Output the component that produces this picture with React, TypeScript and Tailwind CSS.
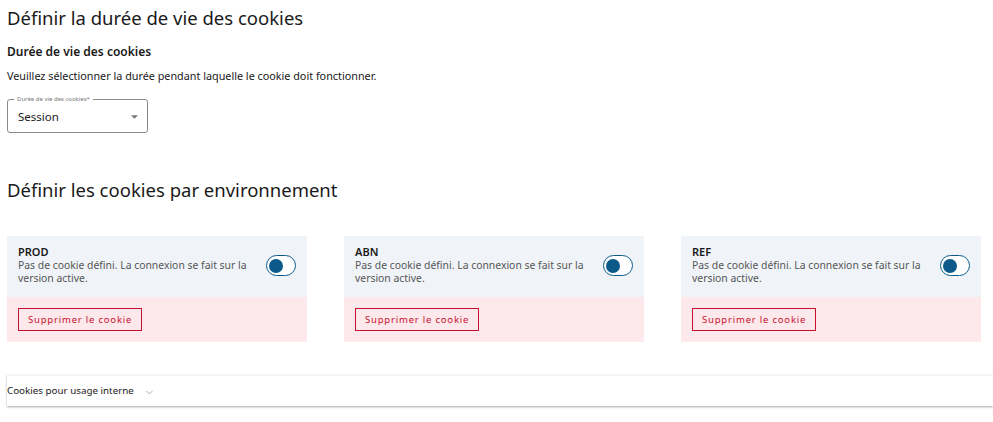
import { ChevronDown } from "lucide-react";

const envs = ["PROD", "ABN", "REF"];

function Toggle() {
  return (
    <div className="w-[30px] h-[21px] rounded-full border-[1.5px] border-[#0b5a8a] bg-white flex items-center px-[2px] shrink-0">
      <div className="w-[14px] h-[14px] rounded-full bg-[#0b5a8a]" />
    </div>
  );
}

function EnvCard({ name }: { name: string }) {
  return (
    <div className="w-[300px] shrink-0">
      <div className="bg-[#f0f4f8] h-[61px] pl-[11px] pr-[11px] pt-[9px] flex items-start gap-[4px]">
        <div className="flex-1">
          <div className="text-[11px] font-semibold leading-[14px] text-[#1a1a1a]">{name}</div>
          <div className="text-[10.4px] leading-[13px] text-[#555]">
            Pas de cookie défini. La connexion se fait sur la version active.
          </div>
        </div>
        <div className="pt-[10px]">
          <Toggle />
        </div>
      </div>
      <div className="bg-[#fde8ec] h-[45px] pl-[11px] pt-[11px] flex items-start">
        <button className="h-[23px] px-[9px] border border-[#c8102e] text-[#c8102e] text-[9.5px] tracking-[0.8px] bg-transparent leading-none">
          Supprimer le cookie
        </button>
      </div>
    </div>
  );
}

export default function App() {
  return (
    <div className="w-[993px] h-[422px] bg-white text-[#1a1a1a] overflow-hidden font-['Noto_Sans',sans-serif]">
      <div className="pl-[7px] pt-[5px]">
        <h1 className="text-[18.5px] leading-[26px] font-normal">Définir la durée de vie des cookies</h1>
        <h2 className="text-[12px] font-semibold leading-[16px] mt-[13px]">Durée de vie des cookies</h2>
        <p className="text-[10.8px] leading-[14px] mt-[9px]">
          Veuillez sélectionner la durée pendant laquelle le cookie doit fonctionner.
        </p>
        <div className="relative mt-[16px] w-[141px] h-[34px] border border-[#8a8a8a] rounded-[3px] flex items-center justify-between pl-[10px] pr-[9px]">
          <span className="absolute -top-[6px] left-[6px] bg-white px-[3px] text-[6px] leading-[10px] text-[#777]">
            Durée de vie des cookies*
          </span>
          <span className="text-[11.5px] text-[#1a1a1a] pt-[2px]">Session</span>
          <svg width="7" height="4" viewBox="0 0 8 4" className="mt-[2px]">
            <path d="M0 0 L8 0 L4 4 Z" fill="#777" />
          </svg>
        </div>
        <h1 className="text-[18.5px] leading-[26px] font-normal mt-[44px]">Définir les cookies par environnement</h1>
      </div>
      <div className="flex gap-[37px] pl-[7px] mt-[33px]">
        {envs.map((e) => (
          <EnvCard key={e} name={e} />
        ))}
      </div>
      <div className="ml-[7px] mt-[33px] h-[31px] bg-white shadow-[0_1px_2px_rgba(0,0,0,0.35)] border-t border-[#f3f3f3] flex items-center gap-[10px]">
        <span className="text-[9.8px] text-[#1a1a1a]">Cookies pour usage interne</span>
        <ChevronDown size={11} strokeWidth={1.2} className="text-[#666] mt-[2px]" />
      </div>
    </div>
  );
}
